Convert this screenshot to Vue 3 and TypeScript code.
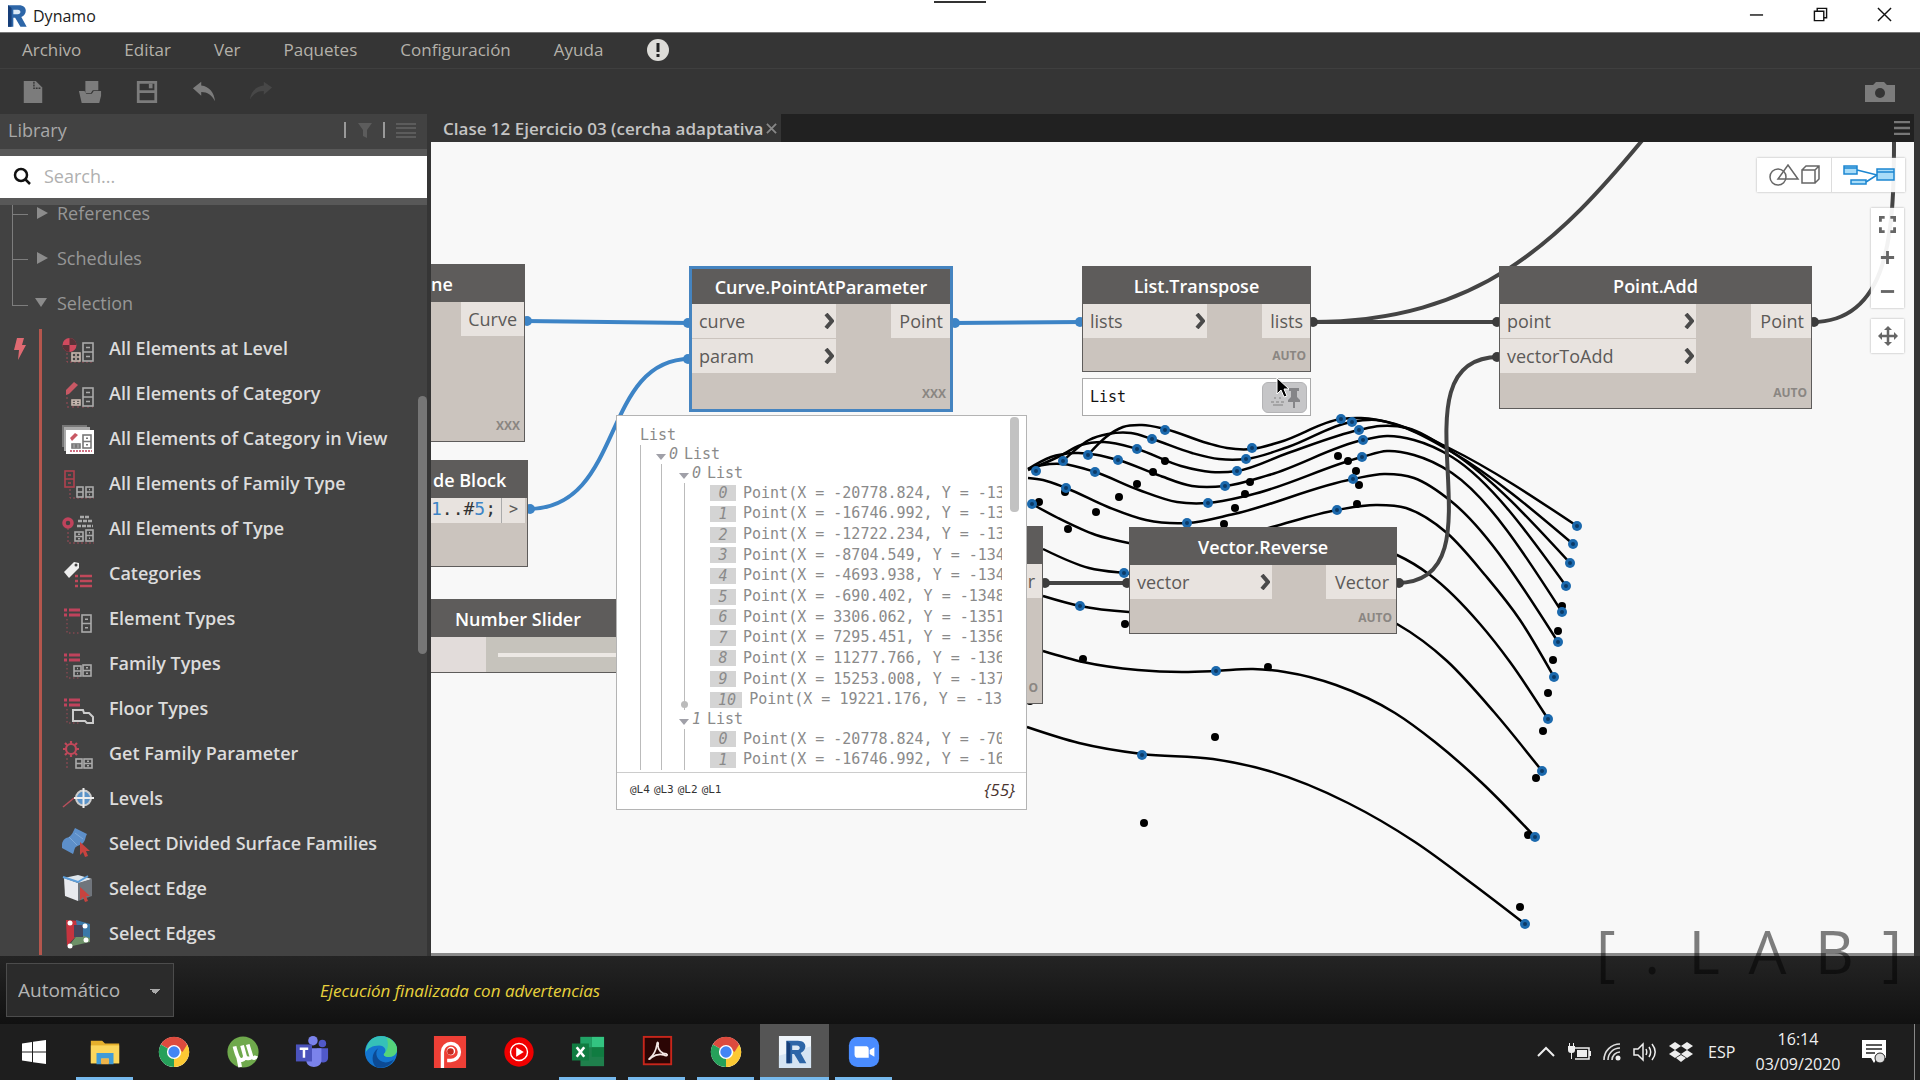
<script setup lang="ts">
type Pt = [number, number]

interface Port { label: string; w: number }
interface GraphNode {
  id: string
  title: string
  x: number
  y: number
  w: number
  h: number
  inputs: Port[]
  output?: Port
  lacing?: string
  selected?: boolean
  cut?: boolean
}

const menus = ['Archivo', 'Editar', 'Ver', 'Paquetes', 'Configuración', 'Ayuda']

const fridge = (x: number, y: number, w = 10, h = 19, c = '#aaa') =>
  `<g fill="none" stroke="${c}" stroke-width="1.6"><rect x="${x}" y="${y}" width="${w}" height="${h}"/><path d="M${x} ${y + h / 2}h${w}M${x + 3} ${y + h / 4}h${w - 6}M${x + 3} ${y + h * 0.75}h${w - 6}"/></g>`
const typeBars =
  '<path d="M4 10h3M9 10h11M4 15h3M9 15h11" stroke="#c0435c" stroke-width="3"/><path d="M7 19v14h14" fill="none" stroke="#a04a56" stroke-dasharray="1.5 2.5"/>'
const redCursor = '<path d="M20 17v13l3-3 2 5 3-1-2-5h4z" fill="#c8433f"/>'

const items = [
  { label: 'All Elements at Level', icon: '<circle cx="9.500" cy="15" r="7" fill="#d24a5e"/><path d="M9.500 15V8a7 7 0 0 1 7 7zM9.500 15v7a7 7 0 0 1-7-7z" fill="#5a3238"/><path d="M7 23v9h26" fill="none" stroke="#a04a56" stroke-dasharray="2 2"/>' + fridge(12, 23, 8, 8, '#c8b8b0') + fridge(23, 13, 10, 18) },
  { label: 'All Elements of Category', icon: '<path d="M6 15 14 7l4 3-9 9-3 1z" fill="#c85864"/><path d="M7 22v10h26" fill="none" stroke="#a04a56" stroke-dasharray="2 3"/>' + fridge(12, 25, 8, 5, '#c8b8b0') + fridge(23, 13, 10, 18) },
  { label: 'All Elements of Category in View', icon: '<path d="M2 5h25v22H2z" fill="#777"/><path d="M4 7h26v24H4z" fill="#aaa"/><path d="M6 10h28v24H6z" fill="#fff"/><path d="m10 18 5-5 3 2-6 6z" fill="#c85864"/><path d="M10 31h22" stroke="#c0435c" stroke-width="1.500" stroke-dasharray="2 1"/>' + fridge(12, 24, 8, 4, '#777') + fridge(23, 15, 8, 13, '#777') },
  { label: 'All Elements of Family Type', icon: fridge(5, 6, 9, 16, '#b0414f') + '<path d="M10 24v9h24" fill="none" stroke="#a04a56" stroke-dasharray="2 2"/>' + fridge(17, 22, 6, 10) + fridge(26, 22, 7, 10) },
  { label: 'All Elements of Type', icon: '<circle cx="8" cy="13" r="4" fill="none" stroke="#c0435c" stroke-width="3.500"/><path d="M8 18v15h26" fill="none" stroke="#a04a56" stroke-dasharray="2 2"/><path d="M18 11h15M17 16h16M20 7h10" stroke="#aaa" stroke-width="2.500" stroke-dasharray="4 1"/>' + fridge(15, 22, 8, 9) + fridge(26, 20, 7, 11) },
  { label: 'Categories', icon: '<path d="M4 17 14 7l5 1v5L9 23z" fill="#eee"/><circle cx="16" cy="10" r="1.500" fill="#424242"/><path d="M15 21h3M20 21h12M15 26h3M20 26h12M15 31h3M20 31h12" stroke="#c0485a" stroke-width="2.500"/>' },
  { label: 'Element Types', icon: typeBars + fridge(22, 15, 9, 17) },
  { label: 'Family Types', icon: typeBars + fridge(14, 21, 7, 10) + fridge(23, 20, 8, 11) },
  { label: 'Floor Types', icon: typeBars + '<path d="M13 20h10l1 3h5l4 4v6h-6l-2-2H13z" fill="none" stroke="#ccc" stroke-width="2"/>' },
  { label: 'Get Family Parameter', icon: '<circle cx="11" cy="14" r="5" fill="none" stroke="#c0485a" stroke-width="2.200"/><path d="M11 6v3M11 19v3M3 14h3M16 14h3M5 8l2 2M15 18l2 2M17 8l-2 2M7 18l-2 2" stroke="#c0485a" stroke-width="2.200"/><path d="M7 23v10" stroke="#a04a56" stroke-dasharray="2 2"/>' + fridge(16, 24, 6, 9) + fridge(24, 24, 8, 9) },
  { label: 'Levels', icon: '<path d="m3 27 11-9" stroke="#b8505c" stroke-width="1.500"/><circle cx="23.500" cy="18" r="7.500" fill="#5b93c8" stroke="#ccc" stroke-width="2"/><path d="M23.500 8v20M14 18h20" stroke="#eee" stroke-width="2"/>' },
  { label: 'Select Divided Surface Families', icon: '<path d="M2 19c1-5 4-6 7-7 3-2 4-5 6-9l12 6c-2 3-1 6-4 9s-6 2-8 5c-1 2-1 4-2 6L2 23z" fill="#5d8fc9"/><path d="M9 12l8 8M15 8l8 6" stroke="#7da9da"/>' + redCursor },
  { label: 'Select Edge', icon: '<path d="M4 8 18 5l14 4-12 4z" fill="#dfe6ec"/><path d="M4 8l14 5v18L5 26z" fill="#e8eaee"/><path d="M18 13l14-4v17l-14 5z" fill="#70757c"/><path d="M3 7l15 5 10-6" fill="none" stroke="#5d9fdb" stroke-width="2"/>' + redCursor },
  { label: 'Select Edges', icon: '<path d="M6 5 20 6l-2 13-11 12z" fill="#c5343f"/><path d="M16 5l14 4v18L18 20z" fill="#3b79a8"/><path d="M8 32l10-13 12 4v4z" fill="#6d9168"/><path d="M14 10h9v12h-9z" fill="#44465c"/><g fill="#fff"><circle cx="10" cy="8" r="2.500"/><circle cx="25" cy="11" r="2.500"/><circle cx="26" cy="25" r="2.500"/><circle cx="10" cy="31" r="2.500"/></g>' },
]

const nodes: GraphNode[] = [
  { id: 'line', title: 'ne', x: 431, y: 264, w: 94, h: 178, inputs: [], output: { label: 'Curve', w: 63 }, lacing: 'XXX', cut: true },
  { id: 'pap', title: 'Curve.PointAtParameter', x: 689, y: 266, w: 264, h: 146, inputs: [{ label: 'curve', w: 144 }, { label: 'param', w: 144 }], output: { label: 'Point', w: 59 }, lacing: 'XXX', selected: true },
  { id: 'transpose', title: 'List.Transpose', x: 1082, y: 266, w: 229, h: 106, inputs: [{ label: 'lists', w: 124 }], output: { label: 'lists', w: 48 }, lacing: 'AUTO' },
  { id: 'add', title: 'Point.Add', x: 1499, y: 266, w: 313, h: 143, inputs: [{ label: 'point', w: 196 }, { label: 'vectorToAdd', w: 196 }], output: { label: 'Point', w: 60 }, lacing: 'AUTO' },
  { id: 'reverse', title: 'Vector.Reverse', x: 1129, y: 527, w: 268, h: 107, inputs: [{ label: 'vector', w: 142 }], output: { label: 'Vector', w: 70 }, lacing: 'AUTO' },
  { id: 'behind', title: '', x: 1010, y: 526, w: 33, h: 178, inputs: [], output: { label: 'r', w: 20 }, lacing: 'O' },
]

const curves: Pt[][] = [
  [[1088, 455], [1106, 437], [1123, 427], [1142, 425], [1165, 429], [1207, 443], [1227, 448], [1252, 449], [1280, 442], [1341, 419], [1361, 418], [1395, 424], [1449, 448], [1577, 526]],
  [[1063, 461], [1089, 440], [1108, 434], [1131, 433], [1152, 439], [1192, 453], [1219, 459], [1246, 459], [1288, 447], [1351, 422], [1376, 420], [1403, 427], [1452, 452], [1573, 544]],
  [[1028, 470], [1058, 457], [1081, 445], [1104, 442], [1137, 449], [1181, 466], [1211, 472], [1237, 471], [1288, 453], [1359, 430], [1380, 426], [1407, 428], [1452, 452], [1570, 563]],
  [[1028, 469], [1051, 457], [1074, 453], [1118, 460], [1158, 475], [1192, 486], [1225, 486], [1269, 475], [1363, 440], [1387, 436], [1414, 440], [1452, 457], [1566, 586]],
  [[1028, 469], [1043, 465], [1062, 464], [1095, 472], [1139, 490], [1177, 502], [1208, 503], [1250, 495], [1362, 457], [1387, 451], [1414, 455], [1452, 473], [1562, 612]],
  [[1028, 478], [1043, 480], [1066, 488], [1108, 507], [1146, 520], [1187, 523], [1234, 514], [1353, 479], [1384, 474], [1414, 478], [1452, 502], [1558, 642]],
  [[1032, 504], [1058, 518], [1096, 535], [1129, 543], [1175, 549], [1220, 541], [1272, 527], [1337, 510], [1376, 505], [1406, 508], [1447, 533], [1485, 575], [1520, 620], [1554, 677]],
  [[1043, 549], [1089, 568], [1124, 573], [1200, 575], [1280, 550], [1350, 543], [1397, 555], [1430, 575], [1480, 624], [1510, 662], [1548, 719]],
  [[1043, 596], [1080, 606], [1129, 612], [1220, 610], [1340, 602], [1397, 624], [1447, 661], [1494, 712], [1542, 771]],
  [[1043, 651], [1083, 662], [1138, 670], [1182, 672], [1216, 671], [1253, 669], [1285, 672], [1336, 685], [1395, 713], [1435, 742], [1482, 783], [1535, 837]],
  [[1027, 727], [1079, 743], [1142, 754], [1213, 759], [1269, 771], [1348, 803], [1415, 842], [1474, 885], [1525, 924]],
]

const blackDots: Pt[] = [[1165, 461], [1153, 472], [1137, 484], [1119, 497], [1096, 512], [1068, 529], [1039, 502], [1065, 492], [1250, 482], [1245, 494], [1235, 508], [1224, 524], [1338, 456], [1348, 461], [1356, 471], [1359, 485], [1357, 504], [1562, 606], [1558, 631], [1125, 624], [1083, 659], [1553, 660], [1268, 667], [1215, 737], [1144, 823], [1548, 693], [1543, 731], [1536, 778], [1528, 835], [1520, 907], [1030, 701]]
const blueDots: Pt[] = [[1165, 430], [1152, 439], [1137, 449], [1118, 460], [1095, 472], [1066, 488], [1032, 504], [1088, 455], [1063, 461], [1036, 471], [1252, 448], [1246, 459], [1237, 471], [1225, 486], [1208, 503], [1187, 523], [1341, 419], [1352, 422], [1359, 430], [1363, 440], [1362, 457], [1353, 479], [1337, 510], [1124, 573], [1080, 606], [1577, 526], [1573, 544], [1570, 563], [1566, 586], [1562, 612], [1558, 642], [1554, 677], [1548, 719], [1542, 771], [1535, 837], [1525, 924], [1216, 671], [1142, 755]]

/** Smooth path through points whose x only grows. */
function smooth(p: Pt[]): string {
  const n = p.length
  const h = p.slice(1).map((q, i) => q[0] - p[i][0])
  const d = p.slice(1).map((q, i) => (q[1] - p[i][1]) / h[i])
  const m = p.map((_, i) => (i > 0 && i < n - 1 ? (d[i - 1] * h[i] + d[i] * h[i - 1]) / (h[i - 1] + h[i]) : 0))
  m[0] = 1.5 * d[0] - 0.5 * m[1]
  m[n - 1] = 1.5 * d[n - 2] - 0.5 * m[n - 2]
  let path = `M${p[0][0]} ${p[0][1]}`
  for (let i = 0; i < n - 1; i++) {
    const s = h[i] / 3
    path += `C${p[i][0] + s} ${p[i][1] + m[i] * s} ${p[i + 1][0] - s} ${p[i + 1][1] - m[i + 1] * s} ${p[i + 1][0]} ${p[i + 1][1]}`
  }
  return path
}

const curvePaths = curves.map(smooth)

const wires = [
  { d: 'M525 321L690 323', blue: true },
  { d: 'M528 509C625 509 600 359 690 359', blue: true },
  { d: 'M953 323L1082 322', blue: true },
  { d: 'M1311 322H1499', blue: false },
  { d: 'M1311 322C1480 322 1560 240 1645 137', blue: false },
  { d: 'M1397 583C1510 583 1385 357 1499 357', blue: false },
  { d: 'M1812 322C1890 322 1894 230 1894 142', blue: false },
  { d: 'M1043 583H1129', blue: false },
]
const plugs: { p: Pt; blue: boolean }[] = [
  { p: [527, 321], blue: true }, { p: [688, 323], blue: true }, { p: [688, 359], blue: true }, { p: [530, 509], blue: true },
  { p: [955, 323], blue: true }, { p: [1080, 322], blue: true },
  { p: [1313, 322], blue: false }, { p: [1497, 322], blue: false }, { p: [1497, 357], blue: false },
  { p: [1399, 583], blue: false }, { p: [1814, 322], blue: false }, { p: [1045, 583], blue: false }, { p: [1127, 583], blue: false },
]

const list0 = ['-20778.824, Y = -13', '-16746.992, Y = -13', '-12722.234, Y = -13', '-8704.549, Y = -134', '-4693.938, Y = -134', '-690.402, Y = -1348', '3306.062, Y = -1351', '7295.451, Y = -1356', '11277.766, Y = -136', '15253.008, Y = -137', '19221.176, Y = -13']
const list1 = ['-20778.824, Y = -70', '-16746.992, Y = -16']
const lists = [list0, list1]

const chrome = '<circle cx="18" cy="18" r="16" fill="#fff"/><path d="M18 18 4.100 10A16 16 0 0 1 31.900 10z" fill="#dd4b3e"/><path d="M18 18 31.900 10A16 16 0 0 1 18 34z" fill="#fcc934"/><path d="M18 18 18 34A16 16 0 0 1 4.100 10z" fill="#26a05a"/><path d="M18 10h14l-5 8z" fill="#dd4b3e"/><path d="m25 22-7 12 9-3 4-11z" fill="#fcc934"/><circle cx="18" cy="18" r="7.500" fill="#fff"/><circle cx="18" cy="18" r="6" fill="#4285f4"/>'
const revitR = '<path d="M9 6h12c6 0 8 3 8 6s-2 6-5 7l6 11h-7l-6-10h-2v10H9z" fill="#2d66a8"/><path d="M9 6l4 3v21H9z" fill="#163e78"/><path d="M15 11h5c4 0 4 5 0 5h-5z" fill="#dbe9f6"/>'
const apps = [
  { name: 'Explorador de archivos', run: true, svg: '<path d="M3 6h12l3 3h15v21H3z" fill="#e5b02c"/><path d="M3 11h30v19H3z" fill="#fbd65c"/><path d="M9 19h18v12h-5v-6h-8v6H9z" fill="#3f9bd8"/><path d="M14 25h8v6h-8z" fill="#f0b44a"/>' },
  { name: 'Chrome', run: false, svg: chrome },
  { name: 'uTorrent', run: false, svg: '<circle cx="18" cy="18" r="16.500" fill="#6fa94c"/><path d="M9 12c1 4 2 8 4 12 2 4 7 3 7-2l-3-11M20 22c1 3 5 4 7 1l-4-13M27 23c2 2 4 2 5-1M13 24l2 10" fill="none" stroke="#fff" stroke-width="4"/>' },
  { name: 'Teams', run: false, svg: '<circle cx="19" cy="6" r="5" fill="#7b83eb"/><circle cx="29" cy="9" r="4" fill="#5059c9"/><path d="M23 14h12v10c0 6-9 7-10 2z" fill="#5059c9"/><path d="M12 14h16v13c0 9-16 9-16 0z" fill="#7b83eb"/><path d="M1 10h17v18H1z" fill="#4b53bc"/><path d="M5 14.500h9M9.500 14v10" stroke="#fff" stroke-width="2.600"/>' },
  { name: 'Edge', run: false, svg: '<circle cx="18" cy="18" r="17" fill="#1475cf"/><path d="M2 15C4 5 11 1 18 1c10 0 17 7 17 14 0 6-5 9-11 8-3-1-4-2-2-4 2-3 0-8-6-8C9 11 4 14 2 18z" fill="#35c1b8"/><path d="M24 3c7 2 11 8 11 12 0 6-5 9-11 8-3-1-4-2-2-4 4-4 4-10 2-16z" fill="#55d47a"/><path d="M15 14c-4 5-2 14 8 15 4 0 8-2 9-4-3 8-12 11-19 9-5-4-6-15 2-20z" fill="#0c4a94"/>' },
  { name: 'Psiphon', run: false, svg: '<path d="M1 1h34v34H1z" fill="#ee3f36"/><path d="M10 35V18a9 9 0 1 1 9 9h-4" fill="none" stroke="#fff" stroke-width="3.500"/><circle cx="19" cy="17" r="4.500" fill="#fff"/><circle cx="18.500" cy="17.500" r="3.500" fill="#c5291f"/>' },
  { name: 'YouTube Music', run: false, svg: '<circle cx="18" cy="18" r="15.500" fill="#f00000"/><circle cx="18" cy="18" r="9" fill="none" stroke="#fff" stroke-width="1.500"/><path d="m15 13 8 5-8 5z" fill="#fff"/>' },
  { name: 'Excel', run: true, svg: '<path d="M10 2h25v31H10z" fill="#1f7f4c"/><path d="M22 2h13v11H22z" fill="#33c481"/><path d="M10 2h12v11H10z" fill="#21a366"/><path d="M22 13h13v10H22z" fill="#107c41"/><path d="M1 9h18v18H1z" fill="#107c41"/><path d="m6 13 8 10M14 13 6 23" stroke="#fff" stroke-width="2.800"/>' },
  { name: 'Acrobat', run: true, svg: '<path d="M3 1h31v31H3z" fill="#c8261b"/><path d="M5 3h27v27H5z" fill="#2b0504"/><path d="M10 25c4-3 7-9 8-15 0-3 2-3 1 1 0 5 4 9 9 9 2 1 0 3-3 1-4-1-9 0-13 3-2 2-3 2-2 1z" fill="none" stroke="#f3e6e4" stroke-width="1.800"/>' },
  { name: 'Chrome 2', run: true, svg: chrome },
  { name: 'Revit', run: true, active: true, svg: '<path d="M1 1h34v34H1z" fill="#eef4fa"/><path d="M1 22 35 12v23H1z" fill="#d5e4f3"/>' + revitR },
  { name: 'Zoom', run: true, svg: '<rect x="2" y="2" width="32" height="32" rx="9" fill="#4a8cff"/><path d="M8 12h13a3 3 0 0 1 2 3v9H10a3 3 0 0 1-2-3zM24 16l5-3v10l-5-3z" fill="#fff"/>' },
]
const markLetters = ['[', '.', 'L', 'A', 'B', ']']
</script>

<template>
  <div class="app">
    <header class="titlebar">
      <svg class="app-icon" viewBox="0 0 36 36" v-html="revitR"></svg>
      <span class="app-name">Dynamo</span>
      <i class="notch"></i>
      <div class="win-btns">
        <button aria-label="Minimizar"><svg viewBox="0 0 16 16"><path d="M1 8.500h14" /></svg></button>
        <button aria-label="Restaurar"><svg viewBox="0 0 16 16"><path d="M1.500 4.500h10v10h-10zM4.500 4V1.500h10v10H12" /></svg></button>
        <button aria-label="Cerrar"><svg viewBox="0 0 16 16"><path d="m1 1 14 14M15 1 1 15" /></svg></button>
      </div>
    </header>

    <nav class="menubar">
      <button v-for="m in menus" :key="m">{{ m }}</button>
      <svg class="alert" viewBox="0 0 24 24"><circle cx="12" cy="12" r="11" fill="#dddcd8" /><path d="M12 5v9M12 16v3" stroke="#222" stroke-width="3" /></svg>
    </nav>

    <div class="toolbar">
      <button aria-label="Nuevo"><svg viewBox="0 0 26 26"><path d="M3 1h13l7 7v17H3z" /><path d="M14 2v7h8" fill="none" stroke="#353535" stroke-width="1.500" stroke-dasharray="2 1" /></svg></button>
      <button aria-label="Abrir"><svg viewBox="0 0 26 26"><path d="M8 1h14v10h-6l-2 3H8z" /><path d="M1 12h6l2 3h6l2-3h8v5l-2 8H4z" /></svg></button>
      <button aria-label="Guardar"><svg viewBox="0 0 26 26"><path fill-rule="evenodd" d="M2 1h22v24H2zM5 4v7h16V4zM5 14v8h16v-8z" /><path d="M15 4h4v5h-4z" /></svg></button>
      <button aria-label="Deshacer"><svg viewBox="0 0 26 26"><path d="M1 9 10 2v4c9 1 14 8 15 17-4-7-8-10-15-10v4z" /></svg></button>
      <button aria-label="Rehacer" disabled><svg viewBox="0 0 26 26"><path d="m25 8-9-6v4C8 7 2 12 1 21c4-6 8-9 15-9v4z" /></svg></button>
      <button class="camera" aria-label="Captura"><svg viewBox="0 0 30 20"><path d="M0 3h8l3-3h8l3 3h8v17H0z" /><circle cx="15" cy="11" r="5" fill="#353535" /></svg></button>
    </div>

    <main class="main">
      <aside class="library">
        <div class="lib-head">
          <h2>Library</h2>
          <svg class="lib-tools" viewBox="0 0 74 20"><path d="M2 2v16M41 2v16" stroke="#999" stroke-width="2" /><path d="M15 3h14l-5 7v8l-4-2v-6z" fill="#5c5c5c" /><path d="M53 4h20M53 8h20M53 13h20M53 17h20" stroke="#5c5c5c" stroke-width="2" /></svg>
        </div>
        <label class="search">
          <svg viewBox="0 0 18 18"><circle cx="8" cy="8" r="6" /><path d="m12 12 5 5" /></svg>
          <input type="text" placeholder="Search..." aria-label="Buscar" />
        </label>
        <div class="lib-list">
          <div class="lib-scroll"></div>
          <ul class="cats">
            <li><i class="tri"></i>References</li>
            <li><i class="tri"></i>Schedules</li>
            <li class="last"><i class="tri open"></i>Selection</li>
          </ul>
          <div class="group">
            <svg class="bolt" viewBox="0 0 12 22"><path d="M3 0h7L8 7h4L4 22l1-10H0z" fill="#df6a72" /></svg>
            <ul class="items">
              <li v-for="it in items" :key="it.label">
                <svg viewBox="0 0 36 36" v-html="it.icon"></svg><span>{{ it.label }}</span>
              </li>
            </ul>
          </div>
        </div>
      </aside>

      <section class="workspace">
        <div class="tabs">
          <div class="tab"><span>Clase 12 Ejercicio 03 (cercha adaptativa</span><button aria-label="Cerrar pestaña"><svg viewBox="0 0 12 12"><path d="m1 1 10 10M11 1 1 11" /></svg></button></div>
          <button class="burger" aria-label="Pestañas"><svg viewBox="0 0 16 14"><path d="M0 1h16M0 7h16M0 13h16" /></svg></button>
        </div>

        <div class="canvas">
          <div class="world">
            <svg class="layer" viewBox="0 0 1920 1080">
              <path v-for="(c, i) in curvePaths" :key="i" :d="c" class="curve" />
              <circle v-for="(p, i) in blackDots" :key="'k' + i" :cx="p[0]" :cy="p[1]" r="4" />
              <g v-for="(p, i) in blueDots" :key="'b' + i">
                <circle :cx="p[0]" :cy="p[1]" r="5" fill="#1b69ad" /><circle :cx="p[0]" :cy="p[1]" r="2" fill="#0c3a66" />
              </g>
              <path v-for="(w, i) in wires" :key="'w' + i" :d="w.d" class="wire" :class="{ blue: w.blue }" />
              <circle v-for="(g, i) in plugs" :key="'p' + i" :cx="g.p[0]" :cy="g.p[1]" r="5" :fill="g.blue ? '#3d84c6' : '#3c3c3c'" />
            </svg>

            <article
              v-for="n in nodes" :key="n.id" class="node" :class="{ selected: n.selected, cut: n.cut }"
              :style="{ left: n.x + 'px', top: n.y + 'px', width: n.w + 'px', height: n.h + 'px' }"
            >
              <h3>{{ n.title }}</h3>
              <div class="ports">
                <div class="ins">
                  <div v-for="p in n.inputs" :key="p.label" class="port" :style="{ width: p.w + 'px' }">
                    <span>{{ p.label }}</span><svg viewBox="0 0 10 16"><path d="m2 1 6 7-6 7" /></svg>
                  </div>
                </div>
                <div v-if="n.output" class="port out" :style="{ width: n.output.w + 'px' }">{{ n.output.label }}</div>
              </div>
              <span class="lacing">{{ n.lacing }}</span>
            </article>

            <article class="node cut code-block">
              <h3>de Block</h3>
              <div class="code"><code><b>1</b>..#<b>5</b>;</code><span>&gt;</span></div>
            </article>

            <article class="node cut slider-node">
              <h3>Number Slider</h3>
              <div class="slider"><span></span><i></i></div>
            </article>

            <div class="preview">
              <span>List</span>
              <button aria-label="Fijar">
                <svg viewBox="0 0 40 26"><path d="M6 18h3M11 18h3M16 18h3M9 14h2M14 14h2M8 21h10" stroke="#999" stroke-width="1.500" /><path d="M24 4h10v3h-2v6l3 3v2h-5v6h-2v-6h-5v-2l3-3V7h-2z" fill="#858588" /></svg>
              </button>
            </div>

            <section class="popup">
              <div class="popup-body">
                <div class="row">List</div>
                <ul class="lv1">
                  <li>
                    <div class="row branch"><i></i><em>0</em>List</div>
                    <ul class="lv2">
                      <li v-for="(l, k) in lists" :key="k">
                        <div class="row branch"><i></i><em>{{ k }}</em>List</div>
                        <ul class="lv3" :class="{ closed: k === 0, short: k === 1 }">
                          <li v-for="(v, j) in l" :key="j"><em>{{ j }}</em>Point(X = {{ v }}</li>
                        </ul>
                      </li>
                    </ul>
                  </li>
                </ul>
              </div>
              <div class="popup-scroll"></div>
              <footer><span class="levels"><span>@L4</span><span>@L3</span><span>@L2</span><span>@L1</span></span><em>{55}</em></footer>
            </section>

            <svg class="cursor" viewBox="0 0 14 22"><path d="M1 1v16l4-4 3 7 3-1-3-7h5z" fill="#000" stroke="#fff" /></svg>
          </div>

          <div class="views">
            <button aria-label="Geometría"><svg viewBox="0 0 52 22"><g fill="none" stroke="#666" stroke-width="1.500"><circle cx="10" cy="13" r="8" /><path d="M10 15 20 1l10 14zM34 6h13v13H34zM34 6l4-4h13v13l-4 4M47 6l4-4" /></g></svg></button>
            <button aria-label="Grafo"><svg viewBox="0 0 52 22"><g fill="#a8dcf8" stroke="#1c86d1" stroke-width="1.500"><path d="M1 2h13v8H1zM8 16h15v4H8zM34 5h17v11H34zM34 8h17M1 4h13" /><path d="M14 6l20 5M23 18l11-7" fill="none" /></g></svg></button>
          </div>
          <div class="zoom">
            <button aria-label="Ajustar"><svg viewBox="0 0 18 18"><path d="M1.500 6V1.500H6M12 1.500h4.500V6M16.500 12v4.500H12M6 16.500H1.500V12" /></svg></button>
            <button aria-label="Acercar"><svg viewBox="0 0 18 18"><path d="M2 9h14M9 2v14" /></svg></button>
            <button aria-label="Alejar"><svg viewBox="0 0 18 18"><path d="M2 9h14" /></svg></button>
          </div>
          <div class="pan">
            <button aria-label="Desplazar"><svg viewBox="0 0 20 20"><path d="M2 10h16M10 2v16" /><path d="m10 0 4 4H6zM10 20l4-4H6zM0 10l4-4v8zM20 10l-4-4v8z" fill="#666" stroke="none" /></svg></button>
          </div>
        </div>
      </section>
    </main>

    <footer class="runbar">
      <select aria-label="Modo de ejecución"><option>Automático</option></select>
      <p>Ejecución finalizada con advertencias</p>
      <div class="mark"><span v-for="c in markLetters" :key="c">{{ c }}</span></div>
    </footer>

    <div class="taskbar">
      <button class="start" aria-label="Inicio"><svg viewBox="0 0 24 24"><path d="M0 3.500 10 2v9.500H0zM11 1.800 24 0v11.500H11zM0 12.500h10V22L0 20.500zM11 12.500h13V24l-13-1.800z" fill="#fff" /></svg></button>
      <button v-for="a in apps" :key="a.name" class="task" :class="{ run: a.run, active: a.active }" :aria-label="a.name">
        <svg viewBox="0 0 36 36" v-html="a.svg"></svg>
      </button>
      <div class="tray">
        <div class="status-icons">
          <svg class="t18" viewBox="0 0 18 18"><path d="m1 13 8-8 8 8" fill="none" stroke="#eee" stroke-width="2" /></svg>
          <svg class="t24" viewBox="0 0 24 18"><path d="M8 5h14v11H8" fill="none" stroke="#eee" stroke-width="1.500" /><path d="M10 7h10v7H10zM22 8h2v5h-2zM1 3h7v4a3 3 0 0 1-3 3v6H4v-6a3 3 0 0 1-3-3zM2 0h1v3H2zM6 0h1v3H6z" fill="#eee" /></svg>
          <svg class="t18" viewBox="0 0 18 18"><g fill="none" stroke="#ddd" stroke-width="1.600"><path d="M1 17A16 16 0 0 1 17 1M5 17A12 12 0 0 1 17 5M9 17a8 8 0 0 1 8-8" /></g><circle cx="15" cy="15" r="2.500" fill="#eee" /></svg>
          <svg class="t24" viewBox="0 0 24 18"><path d="M1 6h4l5-5v16l-5-5H1z" fill="none" stroke="#eee" stroke-width="1.500" /><path d="M13 6c1 2 1 4 0 6M16 4c2 3 2 7 0 10M19 1c4 5 4 11 0 16" fill="none" stroke="#eee" stroke-width="1.500" /></svg>
          <svg class="t24" viewBox="0 0 24 20"><path d="m6 0 6 4-6 4-6-4zM18 0l6 4-6 4-6-4zM6 8l6 4-6 4-6-4zM18 8l6 4-6 4-6-4zM12 13l5 3-5 4-5-4z" fill="#eee" /></svg>
        </div>
        <span class="lang">ESP</span>
        <div class="clock"><span>16:14</span><span>03/09/2020</span></div>
        <svg class="note" viewBox="0 0 24 24"><path d="M0 0h24v18h-9l-3 5-3-5H0z" fill="#fff" /><path d="M4 5h16M4 9h16M4 13h9" stroke="#222" stroke-width="1.600" /><circle cx="18" cy="18" r="5" fill="#ddd" stroke="#222" /></svg>
        <i class="desk"></i>
      </div>
    </div>
  </div>
</template>

<style>
body { margin: 0; background: #1c1c1c; }
</style>

<style scoped>
* { box-sizing: border-box; }
.app {
  display: flex; flex-direction: column; height: 100vh; overflow: hidden;
  font-family: "Open Sans", "Noto Sans", sans-serif; font-size: 17px; color: #aaa; background: #353535;
}
button { background: none; border: 0; padding: 0; margin: 0; font: inherit; color: inherit; display: flex; align-items: center; justify-content: center; }
svg { display: block; flex: none; }
ul { list-style: none; margin: 0; padding: 0; }
h2, h3, p { margin: 0; font-weight: 400; }

.titlebar { flex: none; height: 33px; background: #fff; display: flex; align-items: center; position: relative; color: #1c1c1c; border-bottom: 1px solid #777; }
.app-icon { width: 32px; height: 32px; margin-right: 1px; }
.app-name { font-size: 16px; }
.notch { position: absolute; top: 0; left: calc(50% - 26px); width: 52px; height: 3px; border-bottom: 2px solid #333; }
.win-btns { margin-left: auto; display: flex; align-self: flex-start; height: 28px; padding-right: 4px; }
.win-btns button { width: 64px; }
.win-btns svg { width: 15px; height: 15px; fill: none; stroke: #111; stroke-width: 1.5; }

.menubar { flex: none; height: 36px; display: flex; align-items: center; gap: 43px; padding: 0 0 2px 22px; border-bottom: 1px solid #3f3f3f; color: #b4b1aa; }
.alert { width: 24px; height: 24px; }

.toolbar { flex: none; height: 45px; display: flex; align-items: center; padding: 0 25px 0 20px; gap: 31px; }
.toolbar svg { width: 26px; height: 24px; fill: #7c7c7c; }
.toolbar button:disabled svg { fill: #474747; }
.toolbar .camera { margin-left: auto; }
.toolbar .camera svg { width: 30px; height: 20px; }

.main { flex: 1; min-height: 0; display: flex; }
.library { width: 427px; flex: none; background: #424242; display: flex; flex-direction: column; }
.lib-head { height: 42px; flex: none; display: flex; align-items: center; justify-content: space-between; padding: 0 10px 3px 8px; border-bottom: 7px solid #585858; }
.lib-head h2 { font-size: 18px; color: #a8a8a8; }
.lib-tools { width: 74px; height: 20px; }
.search { height: 49px; flex: none; background: #fff; display: flex; align-items: center; padding: 0 0 3px 13px; gap: 13px; border-bottom: 7px solid #585858; }
.search svg { width: 18px; height: 18px; fill: none; stroke: #111; stroke-width: 2.5; }
.search input { border: 0; outline: 0; flex: 1; background: none; font: inherit; font-size: 18px; padding: 0; }
.search input::placeholder { color: #b0b0b0; opacity: 1; }
.lib-list { flex: 1; min-height: 0; overflow: hidden; position: relative; }
.lib-scroll { position: absolute; right: 0; top: 191px; width: 9px; height: 258px; border-radius: 5px; background: #767676; }
.cats { margin-top: -15px; }
.cats li { height: 45px; display: flex; align-items: center; font-size: 18px; color: #969696; position: relative; padding-left: 12px; }
.cats li::before { content: ""; width: 15px; height: 45px; margin-right: 9px; border-left: 1px solid #7d7d7d; background: linear-gradient(#7d7d7d, #7d7d7d) 0 24px / 15px 1px no-repeat; }
.cats li.last::before { height: 25px; margin-bottom: 20px; border-bottom: 1px solid #7d7d7d; background: none; }
.tri { width: 0; height: 0; border: 6px solid transparent; border-left: 11px solid #8c8c8c; border-right: 0; margin-right: 9px; }
.tri.open { border: 6px solid transparent; border-top: 9px solid #8c8c8c; border-bottom: 0; margin: 0 10px 0 -2px; }
.group { display: flex; padding-left: 14px; }
.bolt { width: 12px; height: 22px; margin: 13px 13px 0 0; }
.items { border-left: 3px solid #b5564d; margin-top: 4px; padding-left: 18px; }
.items li { height: 45px; display: flex; align-items: center; gap: 13px; color: #dcdcdc; font-size: 18px; font-weight: 600; white-space: nowrap; }
.items li:first-child { height: 41px; padding-bottom: 4px; }
.items svg { width: 36px; height: 36px; }

.workspace { flex: 1; min-width: 0; margin: 0 6px 0 4px; display: flex; flex-direction: column; }
.tabs { height: 28px; flex: none; background: #212121; display: flex; justify-content: space-between; align-items: center; padding-right: 4px; }
.tab { height: 28px; width: 350px; background: #353535; display: flex; align-items: center; justify-content: space-between; padding: 0 4px 0 12px; color: #c4c4c4; font-size: 17px; font-weight: 600; white-space: nowrap; }
.tab svg { width: 11px; height: 11px; stroke: #888; stroke-width: 2; }
.burger svg { width: 16px; height: 14px; stroke: #777; stroke-width: 2.5; }

.canvas { flex: 1; min-height: 0; position: relative; overflow: hidden; background: #f8f8f8; border-bottom: 3px solid #8a8a8a; }
.world { position: absolute; left: -431px; top: -142px; }
.layer { position: absolute; left: 0; top: 0; width: 1920px; height: 1080px; }
.curve { fill: none; stroke: #000; stroke-width: 2.5; }
.wire { fill: none; stroke: #444; stroke-width: 4; }
.wire.blue { stroke: #3d84c6; }

.node { position: absolute; background: #cbc4be; border: 1px solid #5e5c5b; display: flex; flex-direction: column; color: #5c5a58; font-size: 18px; }
.node h3 { height: 37px; flex: none; background: #5e5c5b; color: #fff; font-size: 18px; font-weight: 600; line-height: 38px; text-align: center; white-space: nowrap; }
.node.selected { border: 3px solid #4584c0; }
.node.selected h3 { height: 35px; line-height: 36px; }
.node.cut { border-left: 0; }
.node.cut h3 { text-align: left; }
.ports { display: flex; justify-content: space-between; }
.ins { display: flex; flex-direction: column; gap: 1px; }
.port { height: 34px; background: #e8e3df; display: flex; align-items: center; justify-content: space-between; padding: 0 2px 0 7px; }
.port svg { width: 10px; height: 16px; fill: none; stroke: #4a4a4a; stroke-width: 4; }
.port.out { justify-content: flex-end; padding: 0 7px 0 0; margin-left: auto; }
.lacing { margin: auto 4px 3px auto; font-size: 12px; line-height: 24px; font-weight: 700; color: #8a8682; }
.code-block { left: 431px; top: 460px; width: 97px; height: 107px; }
.code-block h3 { padding-left: 2px; }
.code { height: 25px; display: flex; background: #e8e3df; margin-right: 2px; font-family: "DejaVu Sans Mono", monospace; font-size: 18px; line-height: 22px; }
.code code { flex: 1; font-family: inherit; border-right: 1px solid #aaa; color: #333; white-space: nowrap; }
.code b { font-weight: 400; color: #3d84c6; }
.code span { width: 23px; text-align: center; font-size: 15px; }
.slider-node { left: 431px; top: 599px; width: 190px; height: 74px; }
.slider-node h3 { padding-left: 24px; }
.slider { flex: 1; display: flex; align-items: center; gap: 12px; background: #c6c3bc; }
.slider span { width: 55px; height: 100%; background: #e2dcda; }
.slider i { flex: 1; height: 4px; background: #ece8e4; }

.preview { position: absolute; left: 1082px; top: 378px; width: 229px; height: 38px; background: #fff; border: 1px solid #aaa; display: flex; align-items: center; justify-content: space-between; padding: 0 3px 0 7px; color: #111; font: 15px "DejaVu Sans Mono", monospace; }
.preview button { width: 45px; height: 31px; background: #c6c6c8; border-radius: 6px; border: 1px solid #b4b4b6; }
.preview svg { width: 40px; height: 26px; }
.cursor { position: absolute; left: 1276px; top: 377px; width: 14px; height: 22px; }

.popup { position: absolute; left: 616px; top: 415px; width: 411px; height: 395px; background: #fff; border: 1px solid #b4b4b4; color: #8a8a8a; font: 15px/19px "DejaVu Sans Mono", monospace; display: flex; flex-direction: column; }
.popup-body { flex: 1; min-height: 0; overflow: hidden; padding: 10px 0 0 23px; margin-right: 24px; white-space: nowrap; }
.row { height: 19px; display: flex; align-items: center; }
.branch { margin-left: -5px; }
.branch i { border: 5px solid transparent; border-top: 6px solid #a0a0a8; border-bottom: 0; margin: 4px 3px 0 0; }
.branch em { width: 15px; }
.lv1 { border-left: 1px solid #bbb; padding-left: 20px; }
.lv2 { border-left: 1px solid #bbb; padding-left: 22px; }
.lv3 { border-left: 1px solid #bbb; padding-left: 25px; height: 227px; display: flex; flex-direction: column; position: relative; }
.lv3.short { height: 41px; }
.lv3.closed::after { content: ""; position: absolute; left: -4px; bottom: 2px; width: 7px; height: 7px; border-radius: 50%; background: #bbb; }
.lv3 li { flex: 1; display: flex; align-items: center; gap: 7px; }
.lv3 em { min-width: 26px; padding: 0 8px; height: 16px; line-height: 16px; background: #d4d4d4; text-align: center; }
.popup-scroll { position: absolute; right: 7px; top: 1px; width: 9px; height: 95px; border-radius: 4px; background: #c2c2c2; }
.popup footer { height: 37px; flex: none; border-top: 1px solid #ccc; display: flex; align-items: center; justify-content: space-between; padding: 0 11px 4px 13px; }
.levels { display: flex; gap: 4px; font-size: 11px; color: #333; }
.popup footer > em { font-family: "Open Sans", sans-serif; font-size: 17px; color: #4a3430; }

.views, .zoom, .pan { position: absolute; background: rgba(255, 255, 255, 0.93); box-shadow: 0 0 2px #aaa; }
.views { right: 9px; top: 16px; height: 34px; display: flex; }
.views button { width: 74px; }
.views button + button { border-left: 1px solid #ddd; }
.views svg { width: 52px; height: 22px; }
.zoom { right: 10px; top: 66px; width: 33px; height: 100px; display: flex; flex-direction: column; }
.zoom button { flex: 1; }
.zoom svg { width: 17px; height: 17px; fill: none; stroke: #666; stroke-width: 3; }
.pan { right: 10px; top: 177px; width: 33px; height: 34px; display: flex; }
.pan button { flex: 1; }
.pan svg { width: 20px; height: 20px; fill: none; stroke: #666; stroke-width: 2.5; }

.runbar { flex: none; height: 68px; background: linear-gradient(#242424, #111); display: flex; align-items: center; padding-left: 6px; position: relative; }
.runbar select {
  appearance: none; width: 168px; height: 54px; border: 1px solid #4c4c4c; border-radius: 0; padding: 0 11px; color: #b4b4b4; font: 19px "Open Sans", sans-serif;
  background: linear-gradient(to bottom right, #aaa 50%, transparent 50%) 148px 25px / 5px 5px no-repeat, linear-gradient(to bottom left, #aaa 50%, transparent 50%) 143px 25px / 5px 5px no-repeat, #2b2b2b;
}
.runbar p { margin-left: 146px; font-size: 17px; font-style: italic; color: #e8d23c; }
.mark { position: absolute; right: 18px; bottom: 33px; width: 306px; display: flex; justify-content: space-between; font-size: 60px; line-height: 80px; color: rgba(0, 0, 0, 0.5); }

.taskbar { flex: none; height: 56px; background: #1e1e1e; display: flex; }
.start { width: 68px; margin-right: 2px; }
.start svg { width: 24px; height: 24px; }
.task { width: 69px; position: relative; }
.task svg { width: 34px; height: 34px; }
.task.run::after { content: ""; position: absolute; left: 6px; right: 6px; bottom: 0; height: 3px; background: #76b9ed; }
.task.active { background: #555; }
.task.active::after { left: 0; right: 0; }
.tray { margin-left: auto; display: flex; align-items: center; color: #f0f0f0; font-size: 16px; }
.status-icons { display: flex; align-items: center; gap: 12px; margin-right: 15px; }
.t18 { width: 18px; height: 18px; }
.t24 { width: 24px; height: 20px; }
.lang { width: 28px; margin-right: 20px; }
.clock { width: 84px; display: flex; flex-direction: column; align-items: center; line-height: 25px; margin-right: 22px; }
.note { width: 24px; height: 24px; margin-right: 28px; }
.desk { width: 6px; height: 56px; border-left: 1px solid #888; }
</style>
